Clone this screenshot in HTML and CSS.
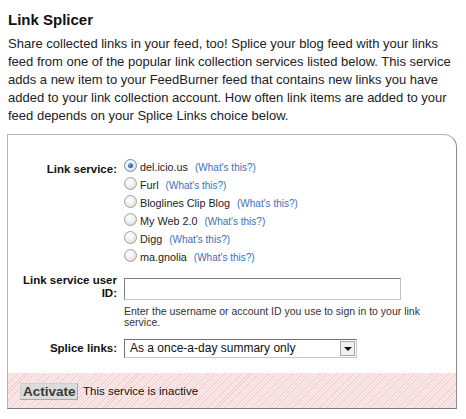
FILE: index.html
```html
<!DOCTYPE html>
<html>
<head>
<meta charset="utf-8">
<title>Link Splicer</title>
<link rel="stylesheet" href="styles.css">
</head>
<body>
<div class="page">
  <h2 class="title">Link Splicer</h2>
  <p class="intro">Share collected links in your feed, too! Splice your blog feed with your links feed from one of the popular link collection services listed below. This service adds a new item to your FeedBurner feed that contains new links you have added to your link collection account. How often link items are added to your feed depends on your Splice Links choice below.</p>
  <div class="panel">
    <div class="form">
      <div class="row">
        <div class="label label-service">Link service:</div>
        <ul class="options">
          <li class="option"><span class="radio checked"></span><span class="opt-name">del.icio.us</span><a class="what">(What's this?)</a></li>
          <li class="option"><span class="radio"></span><span class="opt-name">Furl</span><a class="what">(What's this?)</a></li>
          <li class="option"><span class="radio"></span><span class="opt-name">Bloglines Clip Blog</span><a class="what">(What's this?)</a></li>
          <li class="option"><span class="radio"></span><span class="opt-name">My Web 2.0</span><a class="what">(What's this?)</a></li>
          <li class="option"><span class="radio"></span><span class="opt-name">Digg</span><a class="what">(What's this?)</a></li>
          <li class="option"><span class="radio"></span><span class="opt-name">ma.gnolia</span><a class="what">(What's this?)</a></li>
        </ul>
      </div>
      <div class="row row-user">
        <div class="label label-user">Link service user ID:</div>
        <div class="field">
          <div class="text-input"></div>
          <p class="help">Enter the username or account ID you use to sign in to your link service.</p>
        </div>
      </div>
      <div class="row row-splice">
        <div class="label label-splice">Splice links:</div>
        <div class="select">
          <span class="select-value">As a once-a-day summary only</span>
          <span class="select-arrow"><span class="tri"></span></span>
        </div>
      </div>
    </div>
    <div class="footer">
      <span class="activate">Activate</span>
      <span class="status">This service is inactive</span>
    </div>
  </div>
</div>
</body>
</html>
```
FILE: styles.css
```css
html, body {
  margin: 0;
  padding: 0;
  background: #ffffff;
}
body {
  font-family: "Liberation Sans", Arial, sans-serif;
  color: #222222;
}
.page {
  padding: 11px 0 0 8px;
}
.title {
  margin: 0;
  font-size: 15px;
  line-height: 18px;
  font-weight: bold;
  color: #111111;
}
.intro {
  margin: 6px 0 0;
  width: 452px;
  font-size: 13px;
  line-height: 18px;
  color: #222222;
}
.panel {
  margin: 9px 0 0 -1px;
  width: 448px;
  border: 1px solid #b4b4b4;
  border-right-color: #8c8c8c;
  border-bottom-color: #7a7a7a;
  border-top-right-radius: 13px;
  overflow: hidden;
}
.form {
  padding-top: 23px;
}
.row {
  display: grid;
  grid-template-columns: 109px 1fr;
  column-gap: 7px;
  align-items: start;
}
.label {
  text-align: right;
  font-weight: bold;
  font-size: 11.5px;
  color: #111111;
}
.label-service {
  line-height: 18px;
  padding-top: 2px;
}
.options {
  list-style: none;
  margin: 0;
  padding: 0;
}
.option {
  display: flex;
  align-items: center;
  height: 18px;
  font-size: 10.8px;
  color: #222222;
}
.radio {
  box-sizing: border-box;
  width: 13px;
  height: 13px;
  border-radius: 50%;
  border: 1px solid #a0a0a0;
  background: radial-gradient(circle at 40% 35%, #ffffff 0%, #f0f0f0 45%, #cfcfcf 100%);
  margin: 0 3px 4px 0;
  flex: none;
  position: relative;
}
.radio.checked {
  border-color: #6f8fb0;
}
.radio.checked::after {
  content: "";
  position: absolute;
  left: 3px;
  top: 3px;
  width: 5px;
  height: 5px;
  border-radius: 50%;
  background: radial-gradient(circle at 40% 35%, #7fb4e8 0%, #2a64a8 60%, #1d4f8c 100%);
}
.what {
  margin-left: 7px;
  font-size: 10px;
  color: #3f6fb5;
  text-decoration: none;
}
.row-user {
  margin-top: 8px;
}
.label-user {
  line-height: 12.5px;
}
.text-input {
  box-sizing: border-box;
  margin-top: 4px;
  width: 277px;
  height: 22px;
  border: 1px solid #c4c4c4;
  border-top-color: #808080;
  border-left-color: #808080;
  background: #ffffff;
}
.help {
  margin: 6px 0 0;
  width: 312px;
  font-size: 10.5px;
  line-height: 11px;
  color: #333333;
}
.row-splice {
  margin-top: 11px;
}
.label-splice {
  line-height: 19px;
}
.select {
  box-sizing: border-box;
  position: relative;
  width: 233px;
  height: 19px;
  border: 1px solid #c8c8c8;
  border-top-color: #707070;
  border-left-color: #707070;
  background: #ffffff;
}
.select-value {
  display: block;
  padding-left: 5px;
  font-size: 12px;
  line-height: 17px;
  color: #111111;
}
.select-arrow {
  position: absolute;
  right: 1px;
  top: 1px;
  box-sizing: border-box;
  width: 15px;
  height: 15px;
  border: 1px solid #a8a8a8;
  background: #f0f0f0;
  display: flex;
  align-items: center;
  justify-content: center;
}
.tri {
  width: 0;
  height: 0;
  border-left: 4px solid transparent;
  border-right: 4px solid transparent;
  border-top: 4px solid #111111;
  margin-top: 1px;
}
.footer {
  margin-top: 15px;
  padding: 10px 12px 8px;
  display: flex;
  align-items: center;
  background-color: #f9e4e4;
  background-image: repeating-linear-gradient(-45deg, #f4d0d0 0px, #f4d0d0 1px, #fbeded 1px, #fbeded 2.4px);
}
.activate {
  box-sizing: border-box;
  height: 17px;
  width: 58px;
  padding: 0 2px;
  border: 1px solid #cfcfcf;
  border-right-color: #a8a8a8;
  border-bottom-color: #a8a8a8;
  background: #dcdcdc;
  font-weight: bold;
  font-size: 13.5px;
  line-height: 15px;
  color: #3a3a3a;
  text-align: center;
}
.status {
  margin-left: 5px;
  font-size: 11.5px;
  color: #111111;
  line-height: 15px;
}
```
